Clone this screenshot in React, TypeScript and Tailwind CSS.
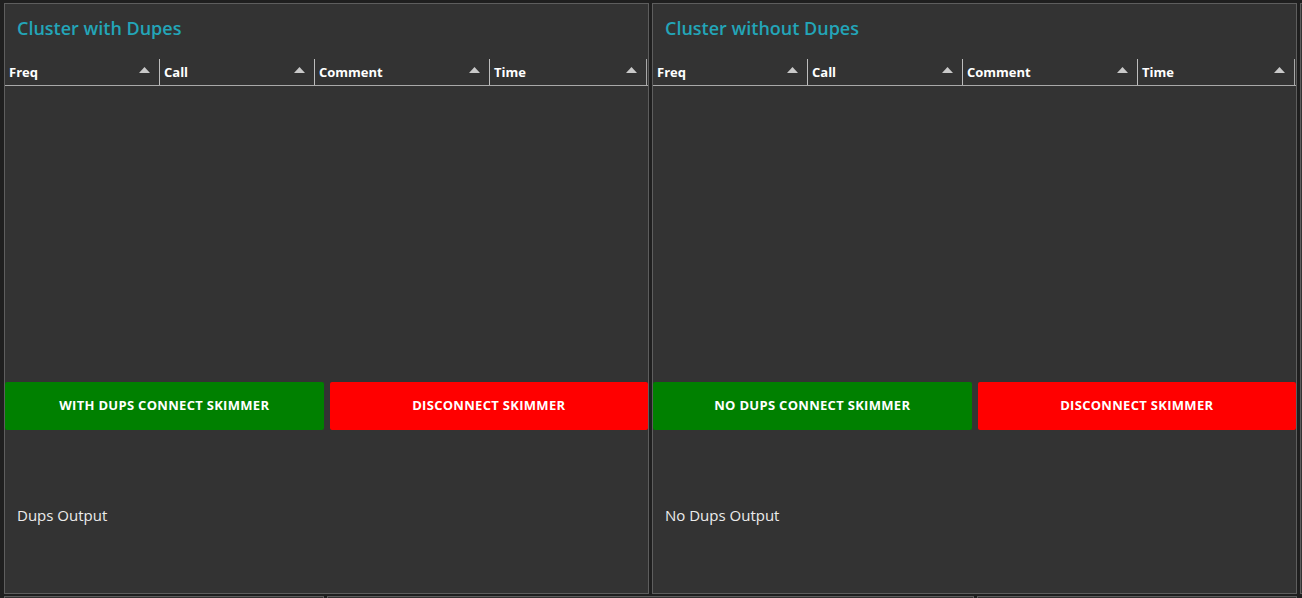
import { ReactNode } from 'react'

const columns = [
  { name: 'Freq', width: 'w-[155px]' },
  { name: 'Call', width: 'w-[155px]' },
  { name: 'Comment', width: 'w-[175px]' },
  { name: 'Time', width: 'w-[157px]' },
]

function SortArrow() {
  return (
    <svg width="11" height="6" viewBox="0 0 11 6" className="shrink-0">
      <polygon points="0,6 5.5,0 11,6" fill="#c9c9c9" />
    </svg>
  )
}

function Grid() {
  return (
    <div className="flex flex-col flex-1 min-h-0">
      <div className="flex h-[27px] border-b border-[#a9a9a9]">
        {columns.map((c, i) => (
          <div
            key={c.name}
            className={`${c.width} flex items-end justify-between pb-[6px] pl-[4px] pr-[9px] border-r ${
              i === columns.length - 1 ? 'border-[#a9a9a9]' : 'border-[#bdbdbd]'
            }`}
          >
            <span className="text-[13px] font-bold text-white leading-none">{c.name}</span>
            <span className="mb-[6px]">
              <SortArrow />
            </span>
          </div>
        ))}
      </div>
      <div className="flex-1" />
    </div>
  )
}

function ActionButton({ color, children }: { color: string; children: ReactNode }) {
  return (
    <button
      className={`${color} flex-1 h-[48px] rounded-[2px] text-white text-[13px] font-bold uppercase tracking-[0.3px] flex items-center justify-center`}
    >
      {children}
    </button>
  )
}

function Panel({ title, connect, output }: { title: string; connect: string; output: string }) {
  return (
    <div className="w-[645px] h-[591px] shrink-0 bg-[#333333] border border-[#5e5e5e] flex flex-col">
      <div className="h-[55px] pl-[12px] pt-[15px]">
        <h2 className="text-[18px] font-semibold text-[#23a5b8] leading-none">{title}</h2>
      </div>
      <Grid />
      <div className="flex gap-[6px]">
        <ActionButton color="bg-[#008000]">{connect}</ActionButton>
        <ActionButton color="bg-[#ff0000]">Disconnect Skimmer</ActionButton>
      </div>
      <div className="h-[163px] pl-[12px] pt-[78px]">
        <p className="text-[15px] text-[#ececec] leading-none">{output}</p>
      </div>
    </div>
  )
}

export default function App() {
  return (
    <div
      className="w-[1302px] h-[598px] overflow-hidden bg-[#1f1f1f]"
      style={{ fontFamily: '"Open Sans", "Noto Sans", sans-serif' }}
    >
      <div className="flex gap-[3px] pl-[4px] pt-[3px]">
        <Panel title="Cluster with Dupes" connect="With Dups Connect Skimmer" output="Dups Output" />
        <Panel title="Cluster without Dupes" connect="No Dups Connect Skimmer" output="No Dups Output" />
        <div className="w-[645px] h-[591px] shrink-0 bg-[#333333] border border-[#5e5e5e]" />
      </div>
      <div className="flex gap-[3px] pl-[4px] pt-[2px]">
        <div className="w-[320px] h-[20px] shrink-0 bg-[#333333] border border-[#5e5e5e]" />
        <div className="w-[647px] h-[20px] shrink-0 bg-[#333333] border border-[#5e5e5e]" />
        <div className="w-[320px] h-[20px] shrink-0 bg-[#333333] border border-[#5e5e5e]" />
      </div>
    </div>
  )
}
